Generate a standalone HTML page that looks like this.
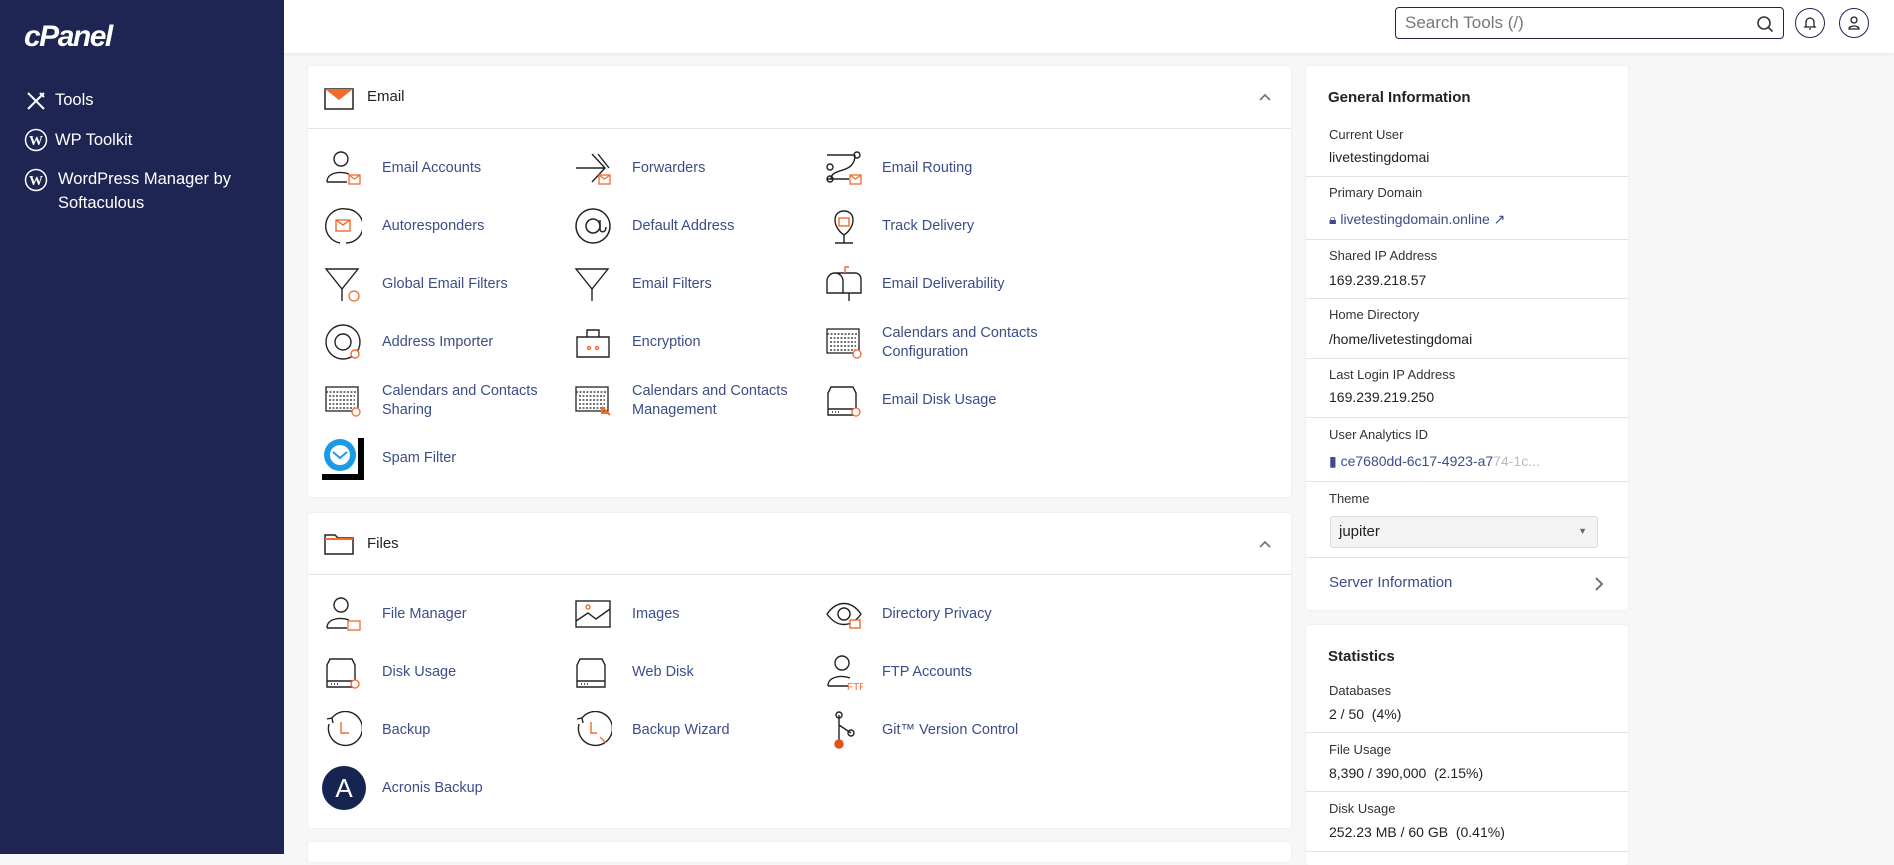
<!DOCTYPE html>
<html><head><meta charset="utf-8"><style>
*{margin:0;padding:0;box-sizing:border-box}
body{width:1894px;height:854px;overflow:hidden;background:#f7f7f7;font-family:"Liberation Sans",sans-serif;position:relative}
.a{position:absolute}
#side{left:0;top:0;width:284px;height:854px;background:#1f2553;color:#fff}
#side .n{position:absolute;left:55px;font-size:16.5px;color:#fff;line-height:24px}
#hdr{left:284px;top:0;width:1610px;height:53px;background:#fff;box-shadow:0 1px 4px rgba(0,0,0,.08)}
.card{position:absolute;background:#fff;border-radius:3px;box-shadow:0 0 2px rgba(0,0,0,.08)}
.ch{position:absolute;left:0;right:0;border-bottom:1px solid #e4e4e4}
.it{position:absolute;font-size:14.5px;color:#3c4d87;line-height:19px}
.ic{position:absolute;width:38px;height:38px}
.lb{position:absolute;left:23px;font-size:13px;color:#333}
.vl{position:absolute;left:23px;font-size:14px;color:#222}
.dv{position:absolute;left:0;right:0;height:1px;background:#e3e3e3}
</style></head><body>
<div id="side" class="a">
<div class="a" style="left:24px;top:20px;font-size:30px;font-weight:bold;font-style:italic;letter-spacing:-1.5px">cPanel</div>
<svg class="a" style="left:25px;top:90px" width="22" height="22" viewBox="0 0 22 22" fill="none" stroke="#fff" stroke-width="2"><path d="M3 3l16 16M19 3L3 19M15 3l4 4"/></svg>
<div class="n" style="top:88px">Tools</div>
<svg class="a" style="left:24px;top:128px" width="24" height="24" viewBox="0 0 24 24"><circle cx="12" cy="12" r="10.5" fill="none" stroke="#fff" stroke-width="1.5"/><text x="12" y="17" font-size="14" font-weight="bold" fill="#fff" text-anchor="middle" font-family="Liberation Serif">W</text></svg>
<div class="n" style="top:128px">WP Toolkit</div>
<svg class="a" style="left:24px;top:168px" width="24" height="24" viewBox="0 0 24 24"><circle cx="12" cy="12" r="10.5" fill="none" stroke="#fff" stroke-width="1.5"/><text x="12" y="17" font-size="14" font-weight="bold" fill="#fff" text-anchor="middle" font-family="Liberation Serif">W</text></svg>
<div class="n" style="top:167px;left:58px">WordPress Manager by<br>Softaculous</div>
</div>
<div id="hdr" class="a">
<div class="a" style="left:1111px;top:7px;width:389px;height:32px;border:1.5px solid #1f2553;border-radius:4px;font-size:17px;color:#777;padding:5px 9px">Search Tools (/)</div>
<svg class="a" style="left:1472px;top:15px" width="18" height="18" viewBox="0 0 18 18" fill="none" stroke="#333" stroke-width="1.6"><circle cx="8" cy="8" r="6"/><path d="M12.5 12.5l4 4"/></svg>
<div class="a" style="left:1511px;top:8px;width:30px;height:30px;border:1.5px solid #1f2553;border-radius:50%"></div>
<svg class="a" style="left:1518px;top:15px" width="16" height="16" viewBox="0 0 16 16" fill="none" stroke="#222" stroke-width="1.3"><path d="M4 11V7a4 4 0 018 0v4l1 1H3zM7 14h2"/></svg>
<div class="a" style="left:1555px;top:8px;width:30px;height:30px;border:1.5px solid #1f2553;border-radius:50%"></div>
<svg class="a" style="left:1562px;top:15px" width="16" height="16" viewBox="0 0 16 16" fill="none" stroke="#222" stroke-width="1.3"><circle cx="8" cy="5" r="3"/><path d="M3 14c0-4 10-4 10 0z"/></svg>
</div>

<div class="card" style="left:308px;top:66px;width:983px;height:431px">
<div class="ch" style="top:0;height:63px"></div>
<svg class="a" style="left:16px;top:22px" width="30" height="22" viewBox="0 0 30 22"><rect x="1" y="1" width="28" height="20" fill="#fff" stroke="#222" stroke-width="1.5"/><path d="M1 1h28L15 12z" fill="#f26a2e"/></svg>
<div class="a" style="left:59px;top:22px;font-size:15px;color:#222">Email</div>
<svg class="a" style="left:950px;top:26px" width="14" height="10" viewBox="0 0 14 10" fill="none" stroke="#777" stroke-width="1.8"><path d="M2 8l5-5 5 5"/></svg>
</div>
<div class="card" style="left:308px;top:513px;width:983px;height:315px">
<div class="ch" style="top:0;height:62px"></div>
<svg class="a" style="left:16px;top:20px" width="30" height="22" viewBox="0 0 30 22" fill="none" stroke="#222" stroke-width="1.5"><path d="M1 2h10l3 3h15v16H1z"/><path d="M1 6h28" stroke="#f26a2e" stroke-width="2"/></svg>
<div class="a" style="left:59px;top:22px;font-size:15px;color:#222">Files</div>
<svg class="a" style="left:950px;top:26px" width="14" height="10" viewBox="0 0 14 10" fill="none" stroke="#777" stroke-width="1.8"><path d="M2 8l5-5 5 5"/></svg>
</div>
<div class="card" style="left:308px;top:842px;width:983px;height:20px"></div>

<svg width="0" height="0" style="position:absolute"><defs>
<g id="env"><rect x="25" y="26" width="11" height="9" fill="#fff" stroke="#f26a2e" stroke-width="1.3"/><path d="M25 26l5.5 4 5.5-4" fill="none" stroke="#f26a2e" stroke-width="1.2"/></g>
<g id="user" fill="none" stroke="#222" stroke-width="1.4"><circle cx="17" cy="10" r="7"/><path d="M3 33c0-10 14-11 22-8M3 33h20"/></g>
<g id="disk" fill="none" stroke="#222" stroke-width="1.4"><path d="M6 6h22l3 6v22H3V12z M3 28h28"/><path d="M7 31h1M10 31h1M13 31h1" /></g>
<g id="cal" fill="none" stroke="#222" stroke-width="1.3"><rect x="2" y="6" width="32" height="24"/><path d="M2 11h32M5 15h26M5 19h26M5 23h26M5 27h26" stroke-dasharray="2 1.5"/></g>
<g id="funnel" fill="none" stroke="#222" stroke-width="1.4"><path d="M2 4h32L18 24zM18 24v12"/></g>
</defs></svg>

<svg class="ic" style="left:324px;top:149px" viewBox="0 0 38 38"><use href="#user"/><use href="#env"/></svg><div class="it" style="left:382px;top:159px">Email Accounts</div>
<svg class="ic" style="left:574px;top:149px" viewBox="0 0 38 38" fill="none" stroke="#222" stroke-width="1.4"><path d="M2 19h28M18 5l13 14-13 14M24 5l11 14"/><use href="#env"/></svg><div class="it" style="left:632px;top:159px">Forwarders</div>
<svg class="ic" style="left:825px;top:149px" viewBox="0 0 38 38" fill="none" stroke="#222" stroke-width="1.4"><path d="M2 6h28M2 30h22M6 30c0-12 24-4 24-24"/><circle cx="32" cy="6" r="3"/><circle cx="5" cy="18" r="3"/><circle cx="5" cy="30" r="3"/><use href="#env"/></svg><div class="it" style="left:882px;top:159px">Email Routing</div>

<svg class="ic" style="left:324px;top:207px" viewBox="0 0 38 38" fill="none" stroke="#222" stroke-width="1.4"><path d="M22 2a17 17 0 110 34M16 36A17 17 0 0122 2"/><rect x="12" y="13" width="14" height="11" stroke="#f26a2e"/><path d="M12 13l7 5 7-5" stroke="#f26a2e"/></svg><div class="it" style="left:382px;top:217px">Autoresponders</div>
<svg class="ic" style="left:574px;top:207px" viewBox="0 0 38 38" fill="none" stroke="#222" stroke-width="1.5"><circle cx="19" cy="19" r="17"/><circle cx="19" cy="19" r="7"/><path d="M26 13v9c0 4 6 4 6-2"/></svg><div class="it" style="left:632px;top:217px">Default Address</div>
<svg class="ic" style="left:825px;top:207px" viewBox="0 0 38 38" fill="none" stroke="#222" stroke-width="1.4"><path d="M19 36V28M19 28c-12-8-12-24 0-24s12 16 0 24"/><rect x="14" y="11" width="10" height="8" stroke="#f26a2e"/><path d="M10 36h18"/></svg><div class="it" style="left:882px;top:217px">Track Delivery</div>

<svg class="ic" style="left:324px;top:265px" viewBox="0 0 38 38"><use href="#funnel"/><circle cx="30" cy="31" r="5" fill="#fff" stroke="#f26a2e" stroke-width="1.3"/></svg><div class="it" style="left:382px;top:275px">Global Email Filters</div>
<svg class="ic" style="left:574px;top:265px" viewBox="0 0 38 38"><use href="#funnel"/></svg><div class="it" style="left:632px;top:275px">Email Filters</div>
<svg class="ic" style="left:825px;top:265px" viewBox="0 0 38 38" fill="none" stroke="#222" stroke-width="1.4"><path d="M2 28V16a8 8 0 0116 0v12zM10 8h20a6 6 0 016 6v14H18M24 28v8"/><path d="M20 8V2h4" stroke="#f26a2e"/></svg><div class="it" style="left:882px;top:275px">Email Deliverability</div>

<svg class="ic" style="left:324px;top:323px" viewBox="0 0 38 38" fill="none" stroke="#222" stroke-width="1.4"><circle cx="19" cy="19" r="17"/><circle cx="19" cy="19" r="8"/><circle cx="31" cy="31" r="4" stroke="#f26a2e" fill="#fff"/></svg><div class="it" style="left:382px;top:333px">Address Importer</div>
<svg class="ic" style="left:574px;top:323px" viewBox="0 0 38 38" fill="none" stroke="#222" stroke-width="1.4"><path d="M3 14h32v20H3zM13 14V7h12v7"/><circle cx="15" cy="25" r="1.5" stroke="#f26a2e"/><circle cx="23" cy="25" r="1.5" stroke="#f26a2e"/></svg><div class="it" style="left:632px;top:333px">Encryption</div>
<svg class="ic" style="left:825px;top:323px" viewBox="0 0 38 38"><use href="#cal"/><circle cx="32" cy="31" r="4" fill="#fff" stroke="#f26a2e" stroke-width="1.3"/></svg><div class="it" style="left:882px;top:324px">Calendars and Contacts<br>Configuration</div>

<svg class="ic" style="left:324px;top:381px" viewBox="0 0 38 38"><use href="#cal"/><circle cx="32" cy="31" r="4" fill="#fff" stroke="#f26a2e" stroke-width="1.3"/></svg><div class="it" style="left:382px;top:382px">Calendars and Contacts<br>Sharing</div>
<svg class="ic" style="left:574px;top:381px" viewBox="0 0 38 38"><use href="#cal"/><path d="M28 26l8 8M28 26v6h6" fill="none" stroke="#f26a2e" stroke-width="2"/></svg><div class="it" style="left:632px;top:382px">Calendars and Contacts<br>Management</div>
<svg class="ic" style="left:825px;top:381px" viewBox="0 0 38 38"><use href="#disk"/><circle cx="31" cy="31" r="4" fill="#fff" stroke="#f26a2e" stroke-width="1.3"/></svg><div class="it" style="left:882px;top:391px">Email Disk Usage</div>

<svg class="ic" style="left:322px;top:436px;width:44px;height:44px" viewBox="0 0 44 44"><rect x="0" y="2" width="42" height="42" fill="#000"/><rect x="0" y="0" width="36" height="38" fill="#fff"/><circle cx="18" cy="19" r="16" fill="#1a9be8"/><circle cx="18" cy="19" r="10" fill="#fff"/><path d="M11 16l7 6 7-6" fill="none" stroke="#1a9be8" stroke-width="2"/></svg><div class="it" style="left:382px;top:449px">Spam Filter</div>

<svg class="ic" style="left:324px;top:595px" viewBox="0 0 38 38"><use href="#user"/><rect x="24" y="26" width="12" height="9" fill="#fff" stroke="#f26a2e" stroke-width="1.3"/></svg><div class="it" style="left:382px;top:605px">File Manager</div>
<svg class="ic" style="left:574px;top:595px" viewBox="0 0 38 38" fill="none" stroke="#222" stroke-width="1.4"><rect x="2" y="6" width="34" height="26"/><path d="M2 26l12-8 8 6 14-10"/><circle cx="14" cy="12" r="2" stroke="#f26a2e"/></svg><div class="it" style="left:632px;top:605px">Images</div>
<svg class="ic" style="left:825px;top:595px" viewBox="0 0 38 38" fill="none" stroke="#222" stroke-width="1.4"><path d="M2 19c10-14 24-14 34 0c-10 14-24 14-34 0z"/><circle cx="19" cy="19" r="6"/><rect x="25" y="25" width="10" height="8" fill="#fff" stroke="#f26a2e"/></svg><div class="it" style="left:882px;top:605px">Directory Privacy</div>

<svg class="ic" style="left:324px;top:653px" viewBox="0 0 38 38"><use href="#disk"/><circle cx="31" cy="31" r="4" fill="#fff" stroke="#f26a2e" stroke-width="1.3"/></svg><div class="it" style="left:382px;top:663px">Disk Usage</div>
<svg class="ic" style="left:574px;top:653px" viewBox="0 0 38 38"><use href="#disk"/></svg><div class="it" style="left:632px;top:663px">Web Disk</div>
<svg class="ic" style="left:825px;top:653px" viewBox="0 0 38 38"><use href="#user"/><text x="22" y="37" font-size="10" fill="#f26a2e" font-family="Liberation Sans">FTP</text></svg><div class="it" style="left:882px;top:663px">FTP Accounts</div>

<svg class="ic" style="left:324px;top:711px" viewBox="0 0 38 38" fill="none" stroke="#222" stroke-width="1.4"><path d="M8 7a17 17 0 11-3 6M3 8l5-1 1 5"/><path d="M17 11v11h8" stroke="#f26a2e"/></svg><div class="it" style="left:382px;top:721px">Backup</div>
<svg class="ic" style="left:574px;top:711px" viewBox="0 0 38 38" fill="none" stroke="#222" stroke-width="1.4"><path d="M8 7a17 17 0 11-3 6M3 8l5-1 1 5"/><path d="M17 11v11h6M26 26l6 6" stroke="#f26a2e"/></svg><div class="it" style="left:632px;top:721px">Backup Wizard</div>
<svg class="ic" style="left:825px;top:711px" viewBox="0 0 38 38" fill="none" stroke="#222" stroke-width="1.4"><path d="M14 4v28M14 14l12 8"/><circle cx="14" cy="4" r="3"/><circle cx="26" cy="22" r="3"/><circle cx="14" cy="33" r="4" fill="#e2521d" stroke="#e2521d"/></svg><div class="it" style="left:882px;top:721px">Git™ Version Control</div>

<div class="a" style="left:322px;top:766px;width:44px;height:44px;border-radius:50%;background:#152451;color:#fff;font-size:26px;text-align:center;line-height:44px">A</div><div class="it" style="left:382px;top:779px">Acronis Backup</div>

<div class="card" style="left:1306px;top:66px;width:322px;height:544px">
<div class="a" style="left:22px;top:23px;font-size:15px;font-weight:bold;color:#222">General Information</div>
<div class="lb" style="top:61px">Current User</div><div class="vl" style="top:83px">livetestingdomai</div>
<div class="dv" style="top:110px"></div>
<div class="lb" style="top:119px">Primary Domain</div><div class="vl" style="top:145px;color:#3c4d87">&#128274;&#xFE0E; livetestingdomain.online ↗</div>
<div class="dv" style="top:173px"></div>
<div class="lb" style="top:182px">Shared IP Address</div><div class="vl" style="top:206px">169.239.218.57</div>
<div class="dv" style="top:232px"></div>
<div class="lb" style="top:241px">Home Directory</div><div class="vl" style="top:265px">/home/livetestingdomai</div>
<div class="dv" style="top:292px"></div>
<div class="lb" style="top:301px">Last Login IP Address</div><div class="vl" style="top:323px">169.239.219.250</div>
<div class="dv" style="top:351px"></div>
<div class="lb" style="top:361px">User Analytics ID</div><div class="vl" style="top:387px;color:#3c4d87;font-size:14px">▮ ce7680dd-6c17-4923-a7<span style="color:#bbb">74-1c...</span></div>
<div class="dv" style="top:415px"></div>
<div class="lb" style="top:425px">Theme</div>
<div class="a" style="left:24px;top:450px;width:268px;height:32px;background:#f3f3f3;border:1px solid #ddd;border-radius:3px;font-size:15px;padding:6px 8px;color:#222">jupiter<span style="position:absolute;right:10px;top:9px;font-size:9px;color:#666">▼</span></div>
<div class="dv" style="top:491px"></div>
<div class="a" style="left:23px;top:508px;font-size:15px;color:#3c4d87">Server Information</div>
<svg class="a" style="left:288px;top:510px" width="10" height="16" viewBox="0 0 10 16" fill="none" stroke="#666" stroke-width="1.8"><path d="M2 2l6 6-6 6"/></svg>
</div>
<div class="card" style="left:1306px;top:625px;width:322px;height:240px">
<div class="a" style="left:22px;top:23px;font-size:15px;font-weight:bold;color:#222">Statistics</div>
<div class="lb" style="top:58px">Databases</div><div class="vl" style="top:81px">2 / 50 &nbsp;(4%)</div>
<div class="dv" style="top:107px"></div>
<div class="lb" style="top:117px">File Usage</div><div class="vl" style="top:140px">8,390 / 390,000 &nbsp;(2.15%)</div>
<div class="dv" style="top:166px"></div>
<div class="lb" style="top:176px">Disk Usage</div><div class="vl" style="top:199px">252.23 MB / 60 GB &nbsp;(0.41%)</div>
<div class="dv" style="top:226px"></div>
</div>
</body></html>
